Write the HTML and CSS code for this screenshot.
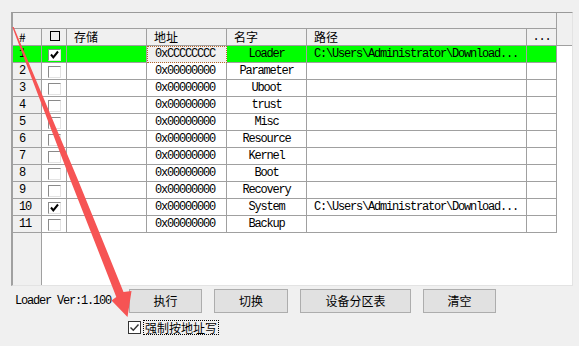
FILE: index.html
```html
<!DOCTYPE html>
<html>
<head>
<meta charset="utf-8">
<link rel="stylesheet" href="styles.css">
</head>
<body>
<div class="page">
  <div class="list">
    <div class="band"><div class="band-in"></div></div>
    <div class="head">
      <div class="c w1">#</div>
      <div class="c w2"><span class="hbox"></span></div>
      <div class="c w3">存储</div>
      <div class="c w4">地址</div>
      <div class="c w5">名字</div>
      <div class="c w6">路径</div>
      <div class="c w7 dots">...</div>
    </div>
    <div class="row sel">
      <div class="c w1 num">1</div>
      <div class="c w2"><span class="cb"><svg viewBox="0 0 11 10" width="11" height="10"><path d="M2 4.5 L4.3 7.3 L9 1.5" fill="none" stroke="#000" stroke-width="2"/></svg></span></div>
      <div class="c w3"></div>
      <div class="c w4 addr focus">0xCCCCCCCC</div>
      <div class="c w5 name">Loader</div>
      <div class="c w6 path">C:\Users\Administrator\Download...</div>
      <div class="c w7"></div>
    </div>
    <div class="row"><div class="c w1 num">2</div><div class="c w2"><span class="cb"></span></div><div class="c w3"></div><div class="c w4 addr">0x00000000</div><div class="c w5 name">Parameter</div><div class="c w6 path"></div><div class="c w7"></div></div>
    <div class="row"><div class="c w1 num">3</div><div class="c w2"><span class="cb"></span></div><div class="c w3"></div><div class="c w4 addr">0x00000000</div><div class="c w5 name">Uboot</div><div class="c w6 path"></div><div class="c w7"></div></div>
    <div class="row"><div class="c w1 num">4</div><div class="c w2"><span class="cb"></span></div><div class="c w3"></div><div class="c w4 addr">0x00000000</div><div class="c w5 name">trust</div><div class="c w6 path"></div><div class="c w7"></div></div>
    <div class="row"><div class="c w1 num">5</div><div class="c w2"><span class="cb"></span></div><div class="c w3"></div><div class="c w4 addr">0x00000000</div><div class="c w5 name">Misc</div><div class="c w6 path"></div><div class="c w7"></div></div>
    <div class="row"><div class="c w1 num">6</div><div class="c w2"><span class="cb"></span></div><div class="c w3"></div><div class="c w4 addr">0x00000000</div><div class="c w5 name">Resource</div><div class="c w6 path"></div><div class="c w7"></div></div>
    <div class="row"><div class="c w1 num">7</div><div class="c w2"><span class="cb"></span></div><div class="c w3"></div><div class="c w4 addr">0x00000000</div><div class="c w5 name">Kernel</div><div class="c w6 path"></div><div class="c w7"></div></div>
    <div class="row"><div class="c w1 num">8</div><div class="c w2"><span class="cb"></span></div><div class="c w3"></div><div class="c w4 addr">0x00000000</div><div class="c w5 name">Boot</div><div class="c w6 path"></div><div class="c w7"></div></div>
    <div class="row"><div class="c w1 num">9</div><div class="c w2"><span class="cb"></span></div><div class="c w3"></div><div class="c w4 addr">0x00000000</div><div class="c w5 name">Recovery</div><div class="c w6 path"></div><div class="c w7"></div></div>
    <div class="row"><div class="c w1 num">10</div><div class="c w2"><span class="cb"><svg viewBox="0 0 11 10" width="11" height="10"><path d="M2 4.5 L4.3 7.3 L9 1.5" fill="none" stroke="#000" stroke-width="2"/></svg></span></div><div class="c w3"></div><div class="c w4 addr">0x00000000</div><div class="c w5 name">System</div><div class="c w6 path">C:\Users\Administrator\Download...</div><div class="c w7"></div></div>
    <div class="row"><div class="c w1 num">11</div><div class="c w2"><span class="cb"></span></div><div class="c w3"></div><div class="c w4 addr">0x00000000</div><div class="c w5 name">Backup</div><div class="c w6 path"></div><div class="c w7"></div></div>
    <div class="filler"><div class="fill-num"></div></div>
  </div>
  <div class="bottom">
    <div class="ver">Loader Ver:1.100</div>
    <div class="btns">
      <div class="btn b1">执行</div>
      <div class="btn b2">切换</div>
      <div class="btn b3">设备分区表</div>
      <div class="btn b1">清空</div>
    </div>
  </div>
  <div class="force">
    <span class="fcb"><svg viewBox="0 0 11 11" width="11" height="11"><path d="M1.5 5.5 L4.3 8.3 L9.5 2.5" fill="none" stroke="#333" stroke-width="1.4"/></svg></span>
    <span class="flabel">强制按地址写</span>
  </div>
</div>
<svg class="arrow" width="579" height="346" viewBox="0 0 579 346">
  <polygon fill="#f65454" points="12.3,27 32.4,80 70.4,180 97.9,250 116.3,297 111.5,300.5 127.5,317 131.5,291 123.5,292 106.5,250 78,180 36,80 13.7,27"/>
</svg>
</body>
</html>
```

FILE: styles.css
```css
* { box-sizing: border-box; }
body {
  margin: 0;
  width: 579px;
  height: 346px;
  overflow: hidden;
  position: relative;
  background: #f0f0f0;
  font-family: "Liberation Mono", monospace;
  color: #000;
}
.page { padding: 12px 0 0 11px; }
.list {
  width: 562px;
  height: 274px;
  border-top: 1px solid #9a9a9a;
  border-left: 2px solid #a0a0a0;
  border-right: 1px solid #e3e3e3;
  border-bottom: 1px solid #e3e3e3;
  background: #fff;
  display: flex;
  flex-direction: column;
}
.band { height: 16px; background: #f0f0f0; flex: none; }
.band-in {
  width: 544px;
  height: 16px;
  border-right: 1px solid #a0a0a0;
  border-bottom: 1px solid #a0a0a0;
}
.head {
  display: flex;
  flex: none;
  height: 17px;
  background: #f0f0f0;
  border-bottom: 1px solid #a0a0a0;
  font-family: "Noto Sans CJK SC", sans-serif;
  font-size: 12px;
}
.c {
  flex: none;
  height: 16px;
  line-height: 16px;
  border-right: 1px solid #a0a0a0;
  padding-left: 7px;
  white-space: nowrap;
  overflow: hidden;
}
.w1 { width: 29px; padding-left: 6px; }
.w2 { width: 25px; }
.w3 { width: 80px; }
.w4 { width: 80px; }
.w5 { width: 80px; }
.w6 { width: 220px; }
.w7 { width: 30px; }
.head .c { line-height: 15px; }
.head .dots {
  padding-left: 0;
  text-align: center;
  font-family: "Liberation Mono", monospace;
  font-size: 12px;
  letter-spacing: -1.2px;
  line-height: 17px;
}
.hbox {
  display: block;
  width: 10px;
  height: 10px;
  border: 1px solid #000;
  margin: 2px 0 0 1px;
}
.row {
  display: flex;
  flex: none;
  height: 17px;
  font-size: 12px;
  letter-spacing: -1.2px;
}
.row .c { height: 17px; border-bottom: 1px solid #a0a0a0; }
.row .num { background: #f0f0f0; }
.row .w2 { padding-left: 6px; padding-top: 3px; }
.cb {
  display: block;
  width: 13px;
  height: 12px;
  border: 1px solid;
  border-color: #8a8a8a #e3e3e3 #e3e3e3 #8a8a8a;
  background: #fff;
}
.cb svg { display: block; }
.addr { padding-left: 8px; }
.name { padding-left: 0; text-align: center; }
.sel .c { background: #00ff00; }
.sel .focus {
  background: #f0f0f0;
  border: 1px dotted #b5652a;
  padding-left: 7px;
  line-height: 15px;
}
.filler { flex: 1; display: flex; }
.fill-num {
  width: 29px;
  background: #f0f0f0;
  border-right: 1px solid #a0a0a0;
}
.bottom {
  display: flex;
  align-items: center;
  margin: 3px 0 0 4px;
  height: 24px;
}
.ver {
  width: 114px;
  font-size: 12px;
  letter-spacing: -1.2px;
  white-space: nowrap;
}
.btns { display: flex; gap: 12px; }
.btn {
  height: 24px;
  border: 1px solid #adadad;
  background: #e1e1e1;
  font-family: "Noto Sans CJK SC", sans-serif;
  font-size: 12px;
  line-height: 21px;
  text-align: center;
}
.b1 { width: 73px; }
.b2 { width: 74px; }
.b3 { width: 111px; }
.force {
  display: flex;
  align-items: center;
  height: 15px;
  margin: 7px 0 0 117px;
}
.fcb {
  width: 13px;
  height: 13px;
  border: 1px solid #333;
  background: #fff;
  margin-right: 2px;
}
.fcb svg { display: block; }
.flabel {
  height: 15px;
  border: 1px dotted #000;
  padding: 0 1px;
  font-family: "Noto Sans CJK SC", sans-serif;
  font-size: 12px;
  line-height: 13px;
  white-space: nowrap;
}
.arrow {
  position: absolute;
  left: 0;
  top: 0;
  pointer-events: none;
}
```
